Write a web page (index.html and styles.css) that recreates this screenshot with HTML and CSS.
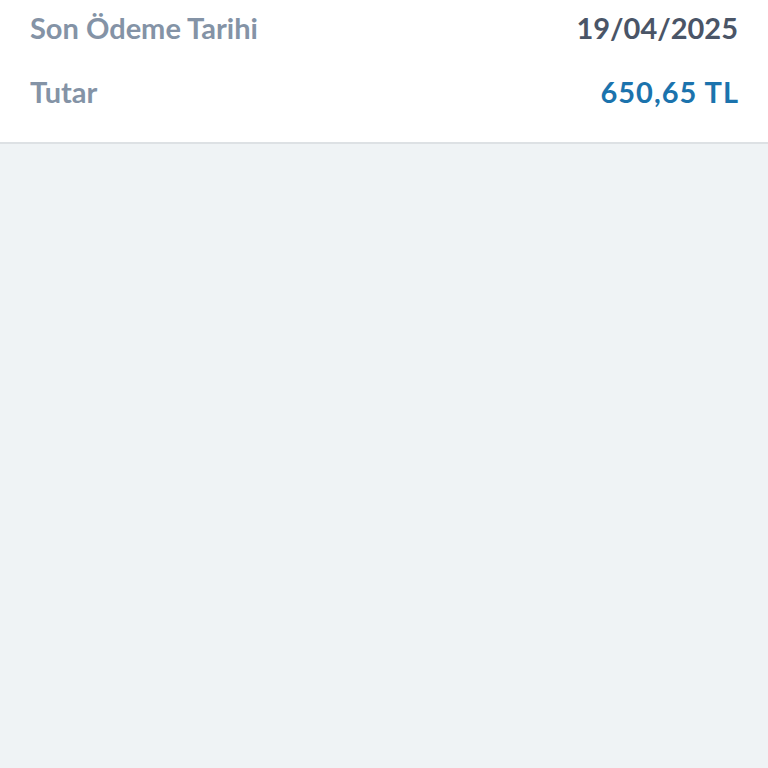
FILE: index.html
```html
<!DOCTYPE html>
<html lang="tr">
<head>
    <meta charset="UTF-8" />
    <meta name="viewport" content="width=device-width, initial-scale=1.0" />
    <title>Ödeme Bilgisi</title>
    <link rel="stylesheet" href="styles.css">
</head>
<body>
    <div class="summary">
        <div class="row">
            <span class="label">Son Ödeme Tarihi</span>
            <span class="value">19/04/2025</span>
        </div>
        <div class="row">
            <span class="label">Tutar</span>
            <span class="value amount">650,65 TL</span>
        </div>
    </div>
</body>
</html>
```

FILE: styles.css
```css
html, body {
    height: 100%;
}
body {
    margin: 0;
    font-family: Lato, "Open Sans", sans-serif;
    background-color: #eff3f5;
}
.summary {
    box-sizing: border-box;
    background-color: #ffffff;
    border-bottom: 2px solid #dde1e4;
    padding: 0 30px;
    height: 144px;
}
.row {
    display: flex;
    justify-content: space-between;
    align-items: center;
    height: 54px;
    margin-bottom: 10px;
}
.label {
    font-size: 29px;
    font-weight: 700;
    color: #8493a6;
}
.value {
    font-size: 29px;
    font-weight: 700;
    color: #4a5567;
}
.amount {
    color: #1b73ad;
    letter-spacing: 1px;
    margin-right: -1px;
}
```
